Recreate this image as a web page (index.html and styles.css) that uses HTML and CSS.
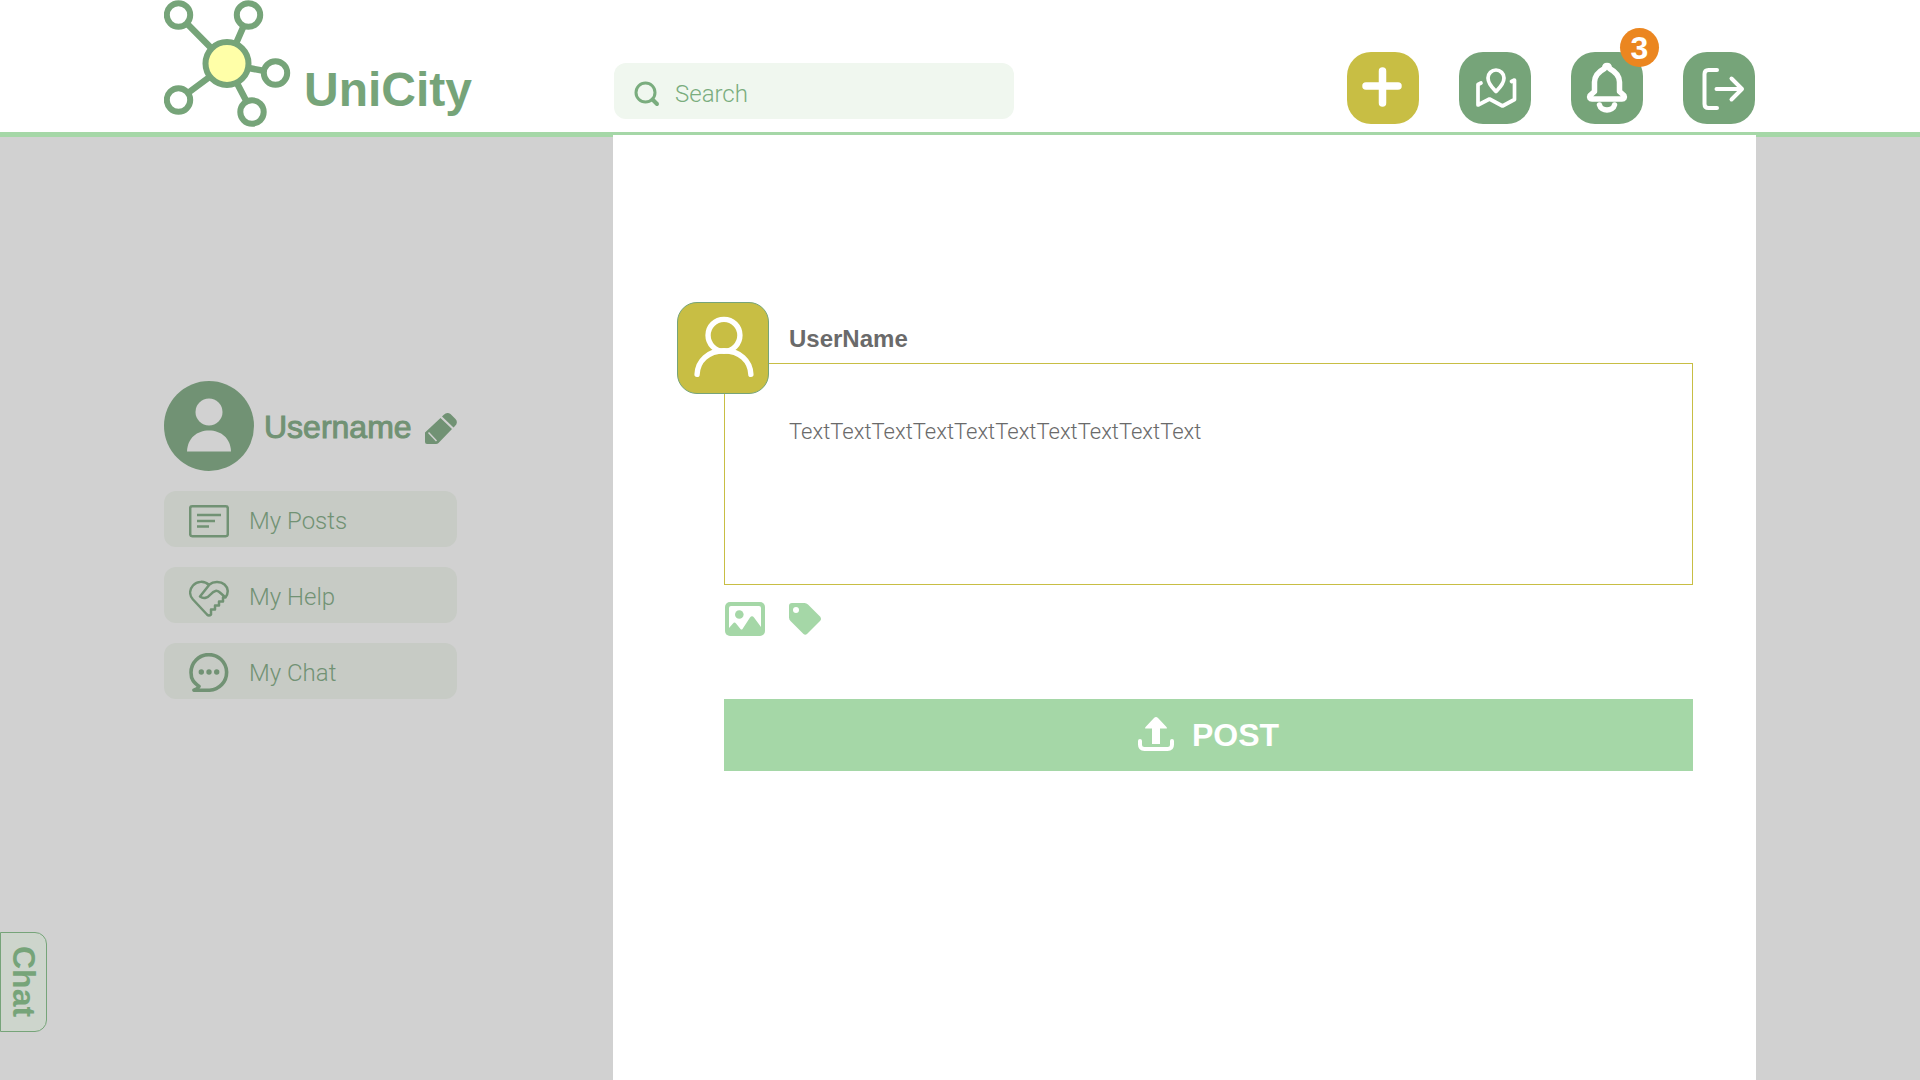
FILE: index.html
```html
<!DOCTYPE html>
<html lang="en">
<head>
<meta charset="utf-8">
<meta name="viewport" content="width=device-width, initial-scale=1">
<title>UniCity</title>
<link rel="stylesheet" href="styles.css">
</head>
<body>
<header class="header">
  <a class="brand" href="#">
    <svg class="brand-mark" width="128" height="128" viewBox="0 0 128 128" fill="#fff" stroke="#76a479" stroke-width="6" aria-hidden="true">
      <path d="M14.500 15 63 64 84.500 15M63 64 111.500 73M63 64 14.500 100M63 64 88 112" fill="none" stroke-width="6.500"/>
      <circle cx="63" cy="63.500" r="21.500" fill="#ffffa8"/>
      <circle cx="14.500" cy="15" r="11.700"/><circle cx="84.500" cy="15" r="11.700"/><circle cx="111.500" cy="73" r="11.700"/><circle cx="14.500" cy="100" r="11.700"/><circle cx="88" cy="112" r="11.700"/>
    </svg>
    <span class="brand-name">UniCity</span>
  </a>
  <div class="topbar">
    <form class="search">
      <svg width="26" height="26" viewBox="0 0 26 26" fill="none" stroke="#7aad7e" stroke-width="3" stroke-linecap="round" aria-hidden="true"><circle cx="11.500" cy="11.500" r="9.500"/><path d="m18.500 18.500 4.500 4.500" stroke-width="4"/></svg>
      <input class="search-input" type="search" placeholder="Search" aria-label="Search">
    </form>
    <nav class="actions" aria-label="Main">
      <button class="action action-new" type="button" aria-label="New post">
        <svg viewBox="0 0 72 72" fill="none" stroke="#fff" stroke-width="7.500" stroke-linecap="round"><path d="M35.500 19v32M19 34h32"/></svg>
      </button>
      <button class="action" type="button" aria-label="Map">
        <svg viewBox="0 0 72 72" fill="none" stroke="#fff" stroke-width="3.700" stroke-linecap="round" stroke-linejoin="round"><path d="M22 31 19 32.500V53l11.500-6L43.500 54 55.500 47.500V28l-3 1.500"/><path d="M37 39.500c-2-2-8-7.500-8-13.500a8 8 0 0 1 16 0c0 6-6 11.500-8 13.500z"/></svg>
      </button>
      <button class="action" type="button" aria-label="Notifications, 3 new">
        <svg viewBox="0 0 72 72" fill="none" stroke="#fff" stroke-width="5.500" stroke-linecap="round" stroke-linejoin="round"><path d="M36 13.500c-1.500 0-2.300 1-2.500 3C27 20 23.500 24 23.500 30v9.500L19 43.500c-1 2 0 3.500 2 3.500h30c2 0 3-1.500 2-3.500L48.500 39.500V30c0-6-3.500-10-10-13.500-.2-2-1-3-2.500-3z"/><path d="M28.500 53c1.500 6.500 13.500 6.500 15 0"/></svg>
        <span class="badge">3</span>
      </button>
      <button class="action" type="button" aria-label="Log out">
        <svg viewBox="0 0 72 72" fill="none" stroke="#fff" stroke-width="4" stroke-linecap="round" stroke-linejoin="round"><path d="M34 18H25.500q-4 0-4 4V52q0 4 4 4H34M33.500 37H59M48.500 26.500 59 37 48.500 47.500"/></svg>
      </button>
    </nav>
  </div>
</header>

<div class="layout">
  <aside class="sidebar">
    <div class="profile">
      <svg width="90" height="90" viewBox="0 0 90 90" fill="#d1d1d1" aria-hidden="true"><circle cx="45" cy="45" r="45" fill="#719274"/><circle cx="45" cy="31" r="13.500"/><path d="M23 70.500C23.500 57 33 49.500 45 49.500S66.500 57 67 70.500z"/></svg>
      <span class="profile-name">Username</span>
      <button class="edit" type="button" aria-label="Edit profile">
        <svg width="32" height="32" viewBox="0 0 32 32" fill="#719274"><path d="M17 4.500 18.500 3Q22-.5 25.500 2L30.500 7Q33.500 10.500 30 14L28.500 15.500zM15.500 6 27 17 13.500 31Q12.500 32 11 32H2Q0 32 0 30V20.500z"/><path d="m3.500 20.500 8 8.500" stroke="#d1d1d1" stroke-width="1.500"/></svg>
      </button>
    </div>
    <nav class="menu" aria-label="Profile">
      <a class="menu-item" href="#">
        <svg width="40" height="40" viewBox="0 0 40 40" fill="none" stroke="#719274" stroke-width="2.500"><rect x="1.200" y="5.200" width="37.600" height="30" rx="2"/><path d="M8 14h24M8 20h18M8 25.500h12"/></svg>
        My Posts
      </a>
      <a class="menu-item" href="#">
        <svg width="40" height="40" viewBox="0 0 40 40" fill="none" stroke="#719274" stroke-width="2.500" stroke-linejoin="round"><path d="M20 8C15.500 3.500 8 4 4 8.500S.5 18.500 4 22.500L18 37.500q2 2 4 0v-5h4v-4h4v-4h4v-4h2.500C40 16 39 10.500 35.500 7.500S24.500 4 20.500 7.500L11 19.500c4 3 8 1 10.500-2 3.500-4 6.500-5 10-1.500l5 4.500"/></svg>
        My Help
      </a>
      <a class="menu-item" href="#">
        <svg width="40" height="40" viewBox="0 0 40 40" fill="none" stroke="#719274" stroke-width="3.600"><path d="M5 37.200H20.500A17.800 17.800 0 1 0 2 19.500C2 27 5 29.500 10 33.500Q9 35.500 5 37.200z" stroke-linejoin="round"/><g fill="#719274" stroke="none"><circle cx="12.300" cy="19" r="2.700"/><circle cx="20" cy="19" r="2.700"/><circle cx="27.700" cy="19" r="2.700"/></g></svg>
        My Chat
      </a>
    </nav>
  </aside>

  <main class="main">
    <form class="composer">
      <div class="avatar">
        <svg viewBox="0 0 92 92" fill="none" stroke="#fff" stroke-width="5.500" stroke-linecap="round" aria-hidden="true"><circle cx="47" cy="33" r="16.300"/><path d="M19.500 73C20 59 31 48.800 47 48.800S74 59 74.500 73"/></svg>
      </div>
      <label class="author" for="post-text">UserName</label>
      <textarea class="post-text" id="post-text" spellcheck="false">TextTextTextTextTextTextTextTextTextText</textarea>
      <div class="attachments">
        <button class="attach" type="button" aria-label="Add picture">
          <svg width="40" height="36" viewBox="0 0 40 36"><rect y="1" width="40" height="34" rx="5" fill="#a5d7a7"/><path d="M6 5h28q2 0 2 2V26L29 16.500q-2-2.500-4 0L17.500 28q-1 1-2 0L11 22.500q-1.500-2-3 0L4 27V7q0-2 2-2z" fill="#fff"/><circle cx="14.300" cy="13.500" r="4.300" fill="#a5d7a7"/></svg>
        </button>
        <button class="attach" type="button" aria-label="Add tag">
          <svg width="32" height="36" viewBox="0 0 32 36"><path d="M3 2H15.500Q17.500 2 19 3.500L31 15.500Q33 18 31 20L18 33Q16.300 34.500 14.500 33L1.500 20Q0 18.500 0 16.500V5Q0 2 3 2z" fill="#a5d7a7"/><circle cx="7" cy="9" r="3" fill="#fff"/></svg>
        </button>
      </div>
      <button class="submit" type="submit">
        <svg width="36" height="36" viewBox="0 0 36 36" fill="none" stroke="#fff" stroke-width="4" stroke-linecap="round" aria-hidden="true"><path d="M2 24v3.500q0 4.500 4.500 4.500h23q4.500 0 4.500-4.500V24"/><path d="M14 27V11.500H8Q6 11.500 8 9.500L16 1q2-2 4 0l8 8.500q2 2 0 2H22V27z" fill="#fff" stroke="none"/></svg>
        POST
      </button>
    </form>
  </main>
</div>
<button class="chat-tab" type="button">Chat</button>
</body>
</html>
```
FILE: styles.css
```css
* { box-sizing: border-box; }

:root {
  --green: #76a479;
  --green-muted: #719274;
  --green-light: #a5d7a7;
  --olive: #c8be44;
  --grey: #d1d1d1;
  --sans: "Liberation Sans", Arial, sans-serif;
  --light: Roboto, "Liberation Sans", sans-serif;
}

body {
  display: flex;
  flex-direction: column;
  min-height: 100vh;
  margin: 0;
  font-family: var(--sans);
  background: var(--grey);
}

button {
  padding: 0;
  border: 0;
  background: none;
  font-family: inherit;
  cursor: pointer;
}

svg { display: block; flex: none; }

.header {
  display: grid;
  grid-template-columns: 449px 1fr;
  min-height: 135px;
  padding: 0 164px;
  background: #fff;
  border-bottom: 3px solid var(--green-light);
}

.brand {
  display: flex;
  align-items: flex-start;
  gap: 12px;
  color: var(--green);
  text-decoration: none;
}

.brand-name {
  padding-top: 60px;
  font-size: 48px;
  font-weight: bold;
  line-height: 60px;
}

.topbar {
  display: flex;
  align-items: flex-end;
  justify-content: space-between;
  padding: 0 1px 8px;
}

.search {
  display: flex;
  align-items: center;
  gap: 15px;
  width: 400px;
  height: 56px;
  margin-bottom: 5px;
  padding: 6px 20px 0;
  border-radius: 12px;
  background: #f0f7ef;
}

.search-input {
  flex: 1;
  min-width: 0;
  padding: 0;
  border: 0;
  outline: 0;
  background: none;
  color: var(--green);
  font: 300 24px/32px var(--light);
}

.search-input::placeholder { color: #7aad7e; }

.actions { display: flex; gap: 40px; }

.action {
  position: relative;
  width: 72px;
  height: 72px;
  border-radius: 24px;
  background: var(--green);
}

.action-new { background: var(--olive); }

.badge {
  position: absolute;
  top: -24px;
  right: -16px;
  width: 39px;
  height: 39px;
  border-radius: 50%;
  background: #eb8620;
  color: #fff;
  font-size: 32px;
  font-weight: bold;
  line-height: 40px;
  text-align: center;
}

.layout {
  display: grid;
  grid-template-columns: 449px 1fr;
  flex: 1;
  padding: 0 164px;
  box-shadow: inset 0 2px var(--green-light);
}

.sidebar {
  padding: 246px 156px 0 0;
  color: var(--green-muted);
}

.profile {
  display: flex;
  align-items: center;
  gap: 10px;
  margin-bottom: 20px;
}

/* The stroke gives the regular face a medium weight. */
.profile-name {
  flex: 1;
  padding-top: 2px;
  font-size: 32px;
  line-height: 40px;
  -webkit-text-stroke: 1px var(--green-muted);
}

.edit { margin-top: 4px; }

.menu { display: grid; gap: 20px; }

.menu-item {
  display: flex;
  align-items: center;
  gap: 20px;
  height: 56px;
  padding: 3px 25px 0;
  border-radius: 12px;
  background: #c7cbc5;
  color: var(--green-muted);
  font: 300 24px/32px var(--light);
  text-decoration: none;
}

.main {
  padding: 167px 63px 64px 111px;
  background: #fff;
}

.composer { position: relative; }

.avatar {
  position: absolute;
  top: 0;
  left: -47px;
  width: 92px;
  height: 92px;
  border: 1px solid var(--green);
  border-radius: 20px;
  background: var(--olive);
}

.author {
  display: block;
  padding: 21px 0 8px 65px;
  color: #6a6a6a;
  font-size: 24px;
  font-weight: bold;
  line-height: 32px;
}

.post-text {
  display: block;
  width: 100%;
  height: 222px;
  padding: 52px 64px;
  border: 1px solid var(--olive);
  outline: 0;
  background: none;
  color: #6a6a6a;
  font: 300 22px/32px var(--light);
  resize: none;
}

.attachments {
  display: flex;
  gap: 24px;
  padding: 16px 0 62px 1px;
}

.submit {
  display: flex;
  align-items: center;
  justify-content: center;
  gap: 18px;
  width: 100%;
  height: 72px;
  background: var(--green-light);
  color: #fff;
  font-size: 32px;
  font-weight: bold;
}

.chat-tab {
  position: fixed;
  bottom: 48px;
  left: 0;
  width: 47px;
  height: 100px;
  border: 1px solid var(--green);
  border-radius: 0 12px 12px 0;
  background: #cdd5cc;
  color: var(--green);
  font-size: 32px;
  font-weight: bold;
  writing-mode: vertical-rl;
}
```
